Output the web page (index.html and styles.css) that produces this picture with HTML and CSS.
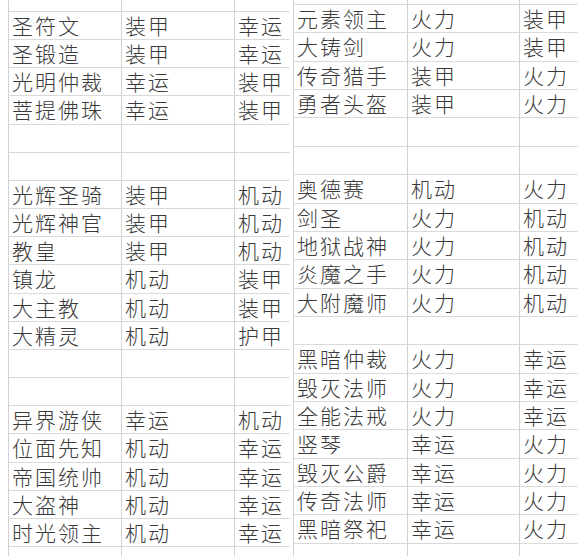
FILE: index.html
```html
<!DOCTYPE html>
<html lang="zh">
<head>
<meta charset="utf-8">
<title>表格</title>
<link rel="stylesheet" href="styles.css">
</head>
<body>
<div class="sheet">
  <div class="panel left">
    <div class="row stub"><div class="cell"></div><div class="cell"></div><div class="cell"></div></div>
    <div class="row"><div class="cell">圣符文</div><div class="cell">装甲</div><div class="cell">幸运</div></div>
    <div class="row"><div class="cell">圣锻造</div><div class="cell">装甲</div><div class="cell">幸运</div></div>
    <div class="row"><div class="cell">光明仲裁</div><div class="cell">幸运</div><div class="cell">装甲</div></div>
    <div class="row"><div class="cell">菩提佛珠</div><div class="cell">幸运</div><div class="cell">装甲</div></div>
    <div class="row"><div class="cell"></div><div class="cell"></div><div class="cell"></div></div>
    <div class="row"><div class="cell"></div><div class="cell"></div><div class="cell"></div></div>
    <div class="row"><div class="cell">光辉圣骑</div><div class="cell">装甲</div><div class="cell">机动</div></div>
    <div class="row"><div class="cell">光辉神官</div><div class="cell">装甲</div><div class="cell">机动</div></div>
    <div class="row"><div class="cell">教皇</div><div class="cell">装甲</div><div class="cell">机动</div></div>
    <div class="row"><div class="cell">镇龙</div><div class="cell">机动</div><div class="cell">装甲</div></div>
    <div class="row"><div class="cell">大主教</div><div class="cell">机动</div><div class="cell">装甲</div></div>
    <div class="row"><div class="cell">大精灵</div><div class="cell">机动</div><div class="cell">护甲</div></div>
    <div class="row"><div class="cell"></div><div class="cell"></div><div class="cell"></div></div>
    <div class="row"><div class="cell"></div><div class="cell"></div><div class="cell"></div></div>
    <div class="row"><div class="cell">异界游侠</div><div class="cell">幸运</div><div class="cell">机动</div></div>
    <div class="row"><div class="cell">位面先知</div><div class="cell">机动</div><div class="cell">幸运</div></div>
    <div class="row"><div class="cell">帝国统帅</div><div class="cell">机动</div><div class="cell">幸运</div></div>
    <div class="row"><div class="cell">大盗神</div><div class="cell">机动</div><div class="cell">幸运</div></div>
    <div class="row"><div class="cell">时光领主</div><div class="cell">机动</div><div class="cell">幸运</div></div>
    <div class="row tail"><div class="cell"></div><div class="cell"></div><div class="cell"></div></div>
  </div>
  <div class="panel right">
    <div class="row stub"><div class="cell"></div><div class="cell"></div><div class="cell"></div></div>
    <div class="row"><div class="cell">元素领主</div><div class="cell">火力</div><div class="cell">装甲</div></div>
    <div class="row"><div class="cell">大铸剑</div><div class="cell">火力</div><div class="cell">装甲</div></div>
    <div class="row"><div class="cell">传奇猎手</div><div class="cell">装甲</div><div class="cell">火力</div></div>
    <div class="row"><div class="cell">勇者头盔</div><div class="cell">装甲</div><div class="cell">火力</div></div>
    <div class="row"><div class="cell"></div><div class="cell"></div><div class="cell"></div></div>
    <div class="row"><div class="cell"></div><div class="cell"></div><div class="cell"></div></div>
    <div class="row"><div class="cell">奥德赛</div><div class="cell">机动</div><div class="cell">火力</div></div>
    <div class="row"><div class="cell">剑圣</div><div class="cell">火力</div><div class="cell">机动</div></div>
    <div class="row"><div class="cell">地狱战神</div><div class="cell">火力</div><div class="cell">机动</div></div>
    <div class="row"><div class="cell">炎魔之手</div><div class="cell">火力</div><div class="cell">机动</div></div>
    <div class="row"><div class="cell">大附魔师</div><div class="cell">火力</div><div class="cell">机动</div></div>
    <div class="row"><div class="cell"></div><div class="cell"></div><div class="cell"></div></div>
    <div class="row"><div class="cell">黑暗仲裁</div><div class="cell">火力</div><div class="cell">幸运</div></div>
    <div class="row"><div class="cell">毁灭法师</div><div class="cell">火力</div><div class="cell">幸运</div></div>
    <div class="row"><div class="cell">全能法戒</div><div class="cell">火力</div><div class="cell">幸运</div></div>
    <div class="row"><div class="cell">竖琴</div><div class="cell">幸运</div><div class="cell">火力</div></div>
    <div class="row"><div class="cell">毁灭公爵</div><div class="cell">幸运</div><div class="cell">火力</div></div>
    <div class="row"><div class="cell">传奇法师</div><div class="cell">幸运</div><div class="cell">火力</div></div>
    <div class="row"><div class="cell">黑暗祭祀</div><div class="cell">幸运</div><div class="cell">火力</div></div>
    <div class="row tail"><div class="cell"></div><div class="cell"></div><div class="cell"></div></div>
  </div>
</div>
</body>
</html>
```
FILE: styles.css
```css
html, body {
  margin: 0;
  padding: 0;
  background: #ffffff;
}

body {
  font-family: "Noto Sans CJK SC", "Noto Sans", sans-serif;
  font-weight: 300;
  color: #3a3a3a;
}

.sheet {
  display: flex;
  height: 556px;
  padding-left: 8px;
}

.panel {
  display: flex;
  flex-direction: column;
  height: 556px;
}

.left {
  width: 282px;
}

.right {
  width: 285px;
  margin-left: 3px;
}

.row {
  display: grid;
  box-sizing: border-box;
  flex: 0 0 auto;
  border-top: 1px solid #dadada;
}

.left .row {
  grid-template-columns: 113px 113px 56px;
  height: 28.16px;
}

.right .row {
  grid-template-columns: 114px 112px 59px;
  height: 28.37px;
}

.left .stub {
  height: 11px;
  border-top: none;
}

.right .stub {
  height: 4px;
  border-top: none;
}

.row.tail {
  flex: 1 1 auto;
}

.cell {
  border-left: 1px solid #d2d2d2;
  padding-left: 3px;
  font-size: 21px;
  line-height: 27px;
  letter-spacing: 2px;
  white-space: nowrap;
}
```
